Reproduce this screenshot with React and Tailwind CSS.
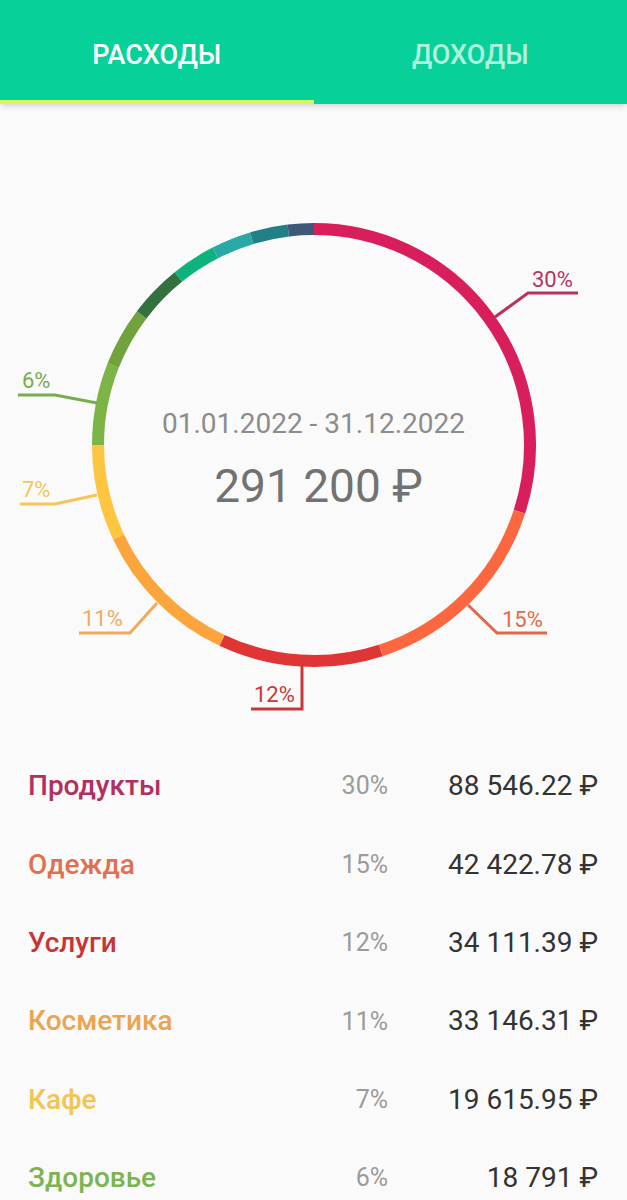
import React from "react";

const CX = 314;
const CY = 445;
const R = 216;

const segments = [
    { from: 0, to: 30, color: "#d81f5b" },
    { from: 30, to: 45, color: "#fc6740" },
    { from: 45, to: 57, color: "#e03535" },
    { from: 57, to: 68, color: "#fba53c" },
    { from: 68, to: 75, color: "#fdc540" },
    { from: 75, to: 81, color: "#7db446" },
    { from: 81, to: 85.3, color: "#70a33e" },
    { from: 85.3, to: 89.2, color: "#35703f" },
    { from: 89.2, to: 92.45, color: "#0db27c" },
    { from: 92.45, to: 95.35, color: "#2aa8a6" },
    { from: 95.35, to: 98.1, color: "#1f8085" },
    { from: 98.1, to: 100, color: "#3f5878" },
];

const labels = [
    { text: "30%", color: "#b8325f", points: "495,317 528,293 578,293", x: 532, y: 287 },
    { text: "15%", color: "#e0694b", points: "468,605 497,633 547,633", x: 502, y: 627 },
    { text: "12%", color: "#c83838", points: "302,664 302,709 251,709", x: 254, y: 702 },
    { text: "11%", color: "#efab5b", points: "157,603 130,633 79,633", x: 82, y: 626 },
    { text: "7%", color: "#f3c65b", points: "97,495 55,504 20,504", x: 22, y: 497 },
    { text: "6%", color: "#7aab4f", points: "97,403 55,395 18,395", x: 22, y: 388 },
];

const rows = [
    { name: "Продукты", color: "text-[#b32f5e]", pct: "30%", amount: "88 546.22 ₽" },
    { name: "Одежда", color: "text-[#e2704f]", pct: "15%", amount: "42 422.78 ₽" },
    { name: "Услуги", color: "text-[#c73434]", pct: "12%", amount: "34 111.39 ₽" },
    { name: "Косметика", color: "text-[#eba452]", pct: "11%", amount: "33 146.31 ₽" },
    { name: "Кафе", color: "text-[#f2c453]", pct: "7%", amount: "19 615.95 ₽" },
    { name: "Здоровье", color: "text-[#7db452]", pct: "6%", amount: "18 791 ₽" },
];

function point(pct) {
    const a = (pct / 100) * Math.PI * 2;
    return [CX + R * Math.sin(a), CY - R * Math.cos(a)];
}

function arc(from, to) {
    const [x1, y1] = point(from);
    const [x2, y2] = point(to);
    const large = to - from > 50 ? 1 : 0;
    return `M ${x1} ${y1} A ${R} ${R} 0 ${large} 1 ${x2} ${y2}`;
}

function Chart() {
    return (
        <div className="relative h-[643px]">
            <svg width="627" height="643" viewBox="0 104 627 643" className="block">
                {segments.map((s, i) => (
                    <path key={i} d={arc(s.from, s.to)} stroke={s.color} strokeWidth="12" fill="none" />
                ))}
                {labels.map((l, i) => (
                    <g key={i}>
                        <polyline points={l.points} stroke={l.color} strokeWidth="3" fill="none" />
                        <text x={l.x} y={l.y} fill={l.color} fontSize="22" fontFamily="Roboto, sans-serif">
                            {l.text}
                        </text>
                    </g>
                ))}
            </svg>

            {/* Period and total */}
            <div className="absolute inset-x-0 top-[304px] flex flex-col items-center">
                <div className="text-[28px] leading-[32px] text-[#8c8c8c]">01.01.2022 - 31.12.2022</div>
                <div className="mt-[19px] pl-[10px] text-[46px] leading-[54px] text-[#727272]">291 200 ₽</div>
            </div>
        </div>
    );
}

export default function App() {
    return (
        <div className="min-h-[1200px] bg-[#fafafa] font-['Roboto',sans-serif]">
            {/* Tabs */}
            <div className="relative z-10 flex h-[104px] bg-[#07d199] shadow-md">
                <div className="flex flex-1 flex-col">
                    <div className="flex flex-1 items-center justify-center pt-[10px] text-[27px] font-medium text-white">
                        РАСХОДЫ
                    </div>
                    <div className="h-[4px] bg-[#d9f65c]" />
                </div>
                <div className="flex flex-1 items-center justify-center pt-[10px] pb-[4px] text-[27px] font-medium text-white/70">
                    ДОХОДЫ
                </div>
            </div>

            <Chart />

            {/* Categories */}
            <div className="flex flex-col">
                {rows.map((row, i) => (
                    <div key={i} className="flex h-[78.4px] items-center pl-[28px] pr-[29px]">
                        <div className={`flex-1 text-[28px] font-medium ${row.color}`}>{row.name}</div>
                        <div className="text-right text-[25px] text-[#9b9b9b]">{row.pct}</div>
                        <div className="w-[210px] text-right text-[28px] text-[#333333]">{row.amount}</div>
                    </div>
                ))}
            </div>
        </div>
    );
}
